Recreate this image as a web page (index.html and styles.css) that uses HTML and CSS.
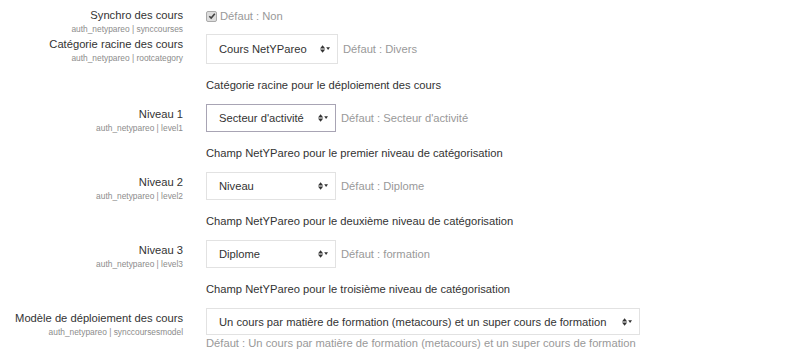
FILE: index.html
```html
<!DOCTYPE html>
<html lang="fr">
  <head>
    <meta charset="UTF-8" />
    <meta name="viewport" content="width=device-width, initial-scale=1.0" />
    <title>Réglages NetYPareo</title>
    <link rel="stylesheet" href="styles.css">
  </head>
  <body>
    <div class="settings">
      <div class="setting first">
        <div class="setting-label">
          <label>Synchro des cours</label>
          <span class="setting-name">auth_netypareo | synccourses</span>
        </div>
        <div class="setting-control">
          <div class="control-line">
            <span class="checkbox">
              <svg width="8" height="8" viewBox="0 0 8 8"><path d="M1.3 4.2 L3.2 6.1 L6.8 1.8" fill="none" stroke="#444" stroke-width="1.6"/></svg>
            </span>
            <span class="default">Défaut : Non</span>
          </div>
        </div>
      </div>

      <div class="setting">
        <div class="setting-label">
          <label>Catégorie racine des cours</label>
          <span class="setting-name">auth_netypareo | rootcategory</span>
        </div>
        <div class="setting-control">
          <div class="control-line">
            <div class="select tall w132">
              <span>Cours NetYPareo</span>
              <svg class="arrows" width="10" height="8" viewBox="0 0 10 8"><path d="M0 3.4 L2.6 0.2 L5.2 3.4 Z M0 4.6 L5.2 4.6 L2.6 7.8 Z M6.2 2.2 L10 2.2 L8.1 5 Z" fill="#333"/></svg>
            </div>
            <span class="default">Défaut : Divers</span>
          </div>
          <p class="description">Catégorie racine pour le déploiement des cours</p>
        </div>
      </div>

      <div class="setting">
        <div class="setting-label">
          <label>Niveau 1</label>
          <span class="setting-name">auth_netypareo | level1</span>
        </div>
        <div class="setting-control">
          <div class="control-line">
            <div class="select w130 focused">
              <span>Secteur d'activité</span>
              <svg class="arrows" width="10" height="8" viewBox="0 0 10 8"><path d="M0 3.4 L2.6 0.2 L5.2 3.4 Z M0 4.6 L5.2 4.6 L2.6 7.8 Z M6.2 2.2 L10 2.2 L8.1 5 Z" fill="#333"/></svg>
            </div>
            <span class="default">Défaut : Secteur d'activité</span>
          </div>
          <p class="description">Champ NetYPareo pour le premier niveau de catégorisation</p>
        </div>
      </div>

      <div class="setting">
        <div class="setting-label">
          <label>Niveau 2</label>
          <span class="setting-name">auth_netypareo | level2</span>
        </div>
        <div class="setting-control">
          <div class="control-line">
            <div class="select w130">
              <span>Niveau</span>
              <svg class="arrows" width="10" height="8" viewBox="0 0 10 8"><path d="M0 3.4 L2.6 0.2 L5.2 3.4 Z M0 4.6 L5.2 4.6 L2.6 7.8 Z M6.2 2.2 L10 2.2 L8.1 5 Z" fill="#333"/></svg>
            </div>
            <span class="default">Défaut : Diplome</span>
          </div>
          <p class="description">Champ NetYPareo pour le deuxième niveau de catégorisation</p>
        </div>
      </div>

      <div class="setting">
        <div class="setting-label">
          <label>Niveau 3</label>
          <span class="setting-name">auth_netypareo | level3</span>
        </div>
        <div class="setting-control">
          <div class="control-line">
            <div class="select w130">
              <span>Diplome</span>
              <svg class="arrows" width="10" height="8" viewBox="0 0 10 8"><path d="M0 3.4 L2.6 0.2 L5.2 3.4 Z M0 4.6 L5.2 4.6 L2.6 7.8 Z M6.2 2.2 L10 2.2 L8.1 5 Z" fill="#333"/></svg>
            </div>
            <span class="default">Défaut : formation</span>
          </div>
          <p class="description">Champ NetYPareo pour le troisième niveau de catégorisation</p>
        </div>
      </div>

      <div class="setting">
        <div class="setting-label">
          <label>Modèle de déploiement des cours</label>
          <span class="setting-name">auth_netypareo | synccoursesmodel</span>
        </div>
        <div class="setting-control">
          <div class="select w434 short">
            <span>Un cours par matière de formation (metacours) et un super cours de formation</span>
            <svg class="arrows" width="10" height="8" viewBox="0 0 10 8"><path d="M0 3.4 L2.6 0.2 L5.2 3.4 Z M0 4.6 L5.2 4.6 L2.6 7.8 Z M6.2 2.2 L10 2.2 L8.1 5 Z" fill="#333"/></svg>
          </div>
          <div class="default below">Défaut : Un cours par matière de formation (metacours) et un super cours de formation</div>
        </div>
      </div>
    </div>
  </body>
</html>
```

FILE: styles.css
```css
body {
  margin: 0;
  font-family: "Liberation Sans", Arial, sans-serif;
  font-size: 11.2px;
  color: #333;
  background: #fff;
}
.settings {
  padding-top: 6px;
}
.setting {
  display: grid;
  grid-template-columns: 183px 1fr;
  column-gap: 23px;
  margin-bottom: 9px;
}
.setting.first {
  margin-bottom: 0;
}
.setting-label {
  display: flex;
  flex-direction: column;
  align-items: flex-end;
  text-align: right;
  padding-top: 1px;
}
.first .setting-label {
  padding-top: 0;
}
.setting-label label {
  line-height: 18px;
  color: #333;
}
.setting-name {
  font-size: 8.4px;
  line-height: 10px;
  color: #8c8c8c;
}
.control-line {
  display: flex;
  align-items: center;
  min-height: 20px;
}
.checkbox {
  width: 9px;
  height: 9px;
  border: 1px solid #aaa;
  border-radius: 2px;
  background: #ddd;
  display: flex;
  align-items: center;
  justify-content: center;
  margin-right: 3px;
}
.default {
  color: #999;
  line-height: 20px;
}
.default.below {
  line-height: 16px;
}
.select {
  box-sizing: border-box;
  height: 28px;
  border: 1px solid #e2e2e2;
  background: #fff;
  display: flex;
  align-items: center;
  justify-content: space-between;
  padding: 0 7px 0 12px;
  margin-right: 5px;
  white-space: nowrap;
}
.select.tall {
  height: 30px;
}
.select.short {
  height: 27px;
}
.select.focused {
  border-color: #a8a4b4;
}
.w132 {
  width: 132px;
}
.w130 {
  width: 130px;
}
.w434 {
  width: 434px;
}
.description {
  margin: 11px 0 0;
  line-height: 20px;
}
```
